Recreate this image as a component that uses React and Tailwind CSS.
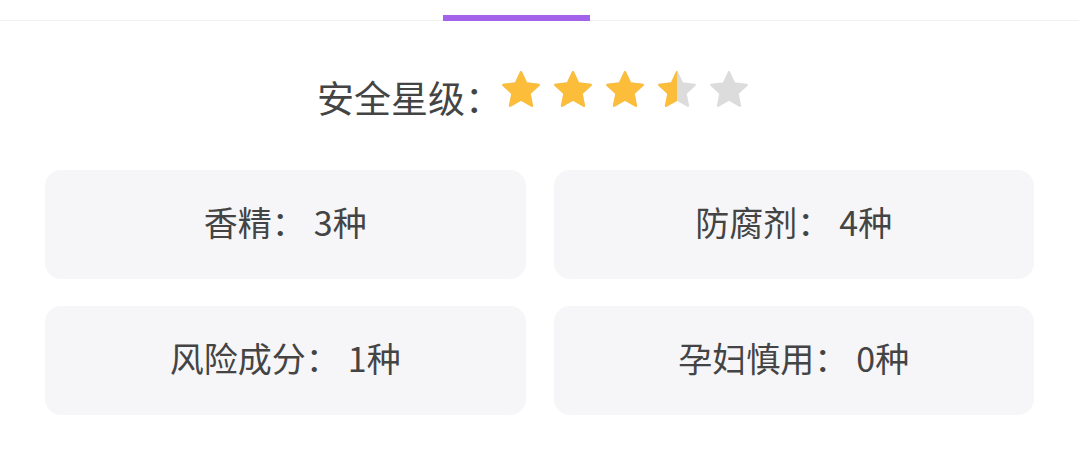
const STAR = "M12 2.6l2.75 5.9 6.45.75-4.78 4.42 1.28 6.38L12 16.85l-5.7 3.2 1.28-6.38L2.8 9.25l6.45-.75z";

function Star({ fill = 1, id }) {
    return (
        <svg viewBox="2.2 2 19.6 18.7" className="w-[38px] h-[36px] mr-[14px]">
            <defs>
                <clipPath id={id}>
                    <rect x="0" y="0" width={12 * fill * 2} height="24" />
                </clipPath>
            </defs>
            <path d={STAR} fill="#dcdcdc" stroke="#dcdcdc" strokeWidth="1.2" strokeLinejoin="round" />
            <path d={STAR} fill="#fcbe3a" stroke="#fcbe3a" strokeWidth="1.2" strokeLinejoin="round" clipPath={`url(#${id})`} />
        </svg>
    )
}

const items = [
    { label: "香精", value: "3种" },
    { label: "防腐剂", value: "4种" },
    { label: "风险成分", value: "1种" },
    { label: "孕妇慎用", value: "0种" },
];

export default function App() {
    const stars = [1, 1, 1, 0.5, 0];

    return (
        <div className="w-[1079px] h-[454px] bg-white text-[#444] font-['Noto_Sans_CJK_SC',sans-serif]">
            <div className="h-[21px] border-b border-[#f0f0f0]">
                <div className="ml-[443px] pt-[15px]">
                    <div className="w-[147px] h-[6px] bg-[#a263ea]" />
                </div>
            </div>

            <div className="mt-[44px] h-[60px] flex items-center justify-center">
                <span className="text-[37px] leading-none mt-[4px]">安全星级：</span>
                <div className="flex items-center mb-[13px]">
                    {stars.map((f, i) => (
                        <Star key={i} fill={f} id={`star-clip-${i}`} />
                    ))}
                </div>
            </div>

            <div className="mt-[45px] px-[45px] grid grid-cols-2 gap-x-[28px] gap-y-[27px]">
                {items.map((item) => (
                    <div key={item.label} className="h-[109px] pb-[5px] rounded-[16px] bg-[#f6f6f8] flex items-center justify-center">
                        <span className="text-[34px] leading-none">{item.label}：</span>
                        <span className="text-[34px] leading-none ml-[8px]">{item.value}</span>
                    </div>
                ))}
            </div>
        </div>
    )
}
